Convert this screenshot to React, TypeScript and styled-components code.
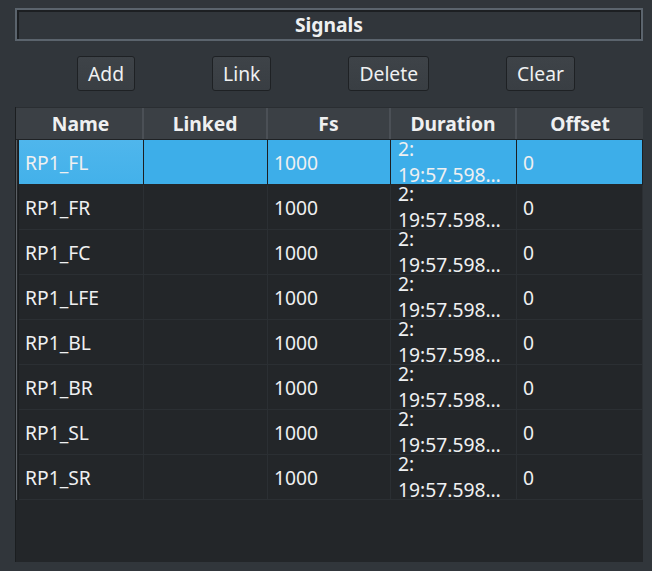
import React from "react";
import styled, { createGlobalStyle } from "styled-components";

const Global = createGlobalStyle`
  html, body { margin: 0; padding: 0; background: #31363b; }
  body { font-family: "Noto Sans", "Open Sans", sans-serif; }
  * { box-sizing: border-box; }
`;

const Window = styled.div`
  width: 652px;
  height: 571px;
  background: #31363b;
  padding: 8px 9px 9px 15px;
  display: flex;
  flex-direction: column;
  color: #eff0f1;
  font-size: 19.3px;
  overflow: hidden;
`;

const TitleFrame = styled.div`
  height: 33px;
  border: 2px solid #5b646d;
  box-shadow: inset 2px 2px 0 #1c1f22, inset -1px 0 0 #1c1f22;
  display: flex;
  align-items: center;
  justify-content: center;
  font-weight: 700;
  line-height: 1;
  padding-top: 1px;
`;

const ButtonRow = styled.div`
  margin: 15px -9px 0 -15px;
  height: 35px;
  display: flex;
  justify-content: space-evenly;
`;

const Button = styled.button`
  height: 35px;
  padding: 0 10px;
  background: linear-gradient(#3e4348, #393e43);
  border: 1px solid #1e2124;
  border-radius: 3px;
  color: #eff0f1;
  font-family: inherit;
  font-size: 19.3px;
  line-height: 1;
`;

const Table = styled.div`
  margin-top: 16px;
  height: 455px;
  background: #232629;
  border-left: 1px solid #1b1e20;
  display: flex;
  flex-direction: column;
`;

const cols = "3px 125px 124px 123px 126px 126px";

const HeaderRow = styled.div`
  display: grid;
  grid-template-columns: ${cols};
  height: 33px;
  background: #3b4045;
  border-top: 1px solid #2a2e32;
  border-bottom: 1px solid #1f2225;
`;

const HeaderCell = styled.div<{ $corner?: boolean }>`
  display: flex;
  align-items: center;
  justify-content: center;
  font-weight: 700;
  border-right: ${(p) => (p.$corner ? "none" : "2px solid #4b5056")};
  padding-bottom: 1px;
  white-space: nowrap;
  &:last-child { border-right: none; }
`;

const Row = styled.div<{ $selected?: boolean }>`
  display: grid;
  grid-template-columns: ${cols};
  height: 45px;
  background: ${(p) => (p.$selected ? "#3daee9" : "#232629")};
`;

const RowHeader = styled.div`
  background: #232629;
  border-left: 1px solid #5a5f64;
  border-right: 1px solid #1b1e20;
`;

const Cell = styled.div<{ $focus?: boolean }>`
  display: flex;
  align-items: center;
  padding-left: 6px;
  border-right: 1px solid #2b2f33;
  border-bottom: 1px solid #2b2f33;
  background: ${(p) => (p.$focus ? "linear-gradient(#4fb6ec, #43b1ea)" : "transparent")};
  white-space: nowrap;
  overflow: hidden;
`;

const SelCell = styled(Cell)`
  border-right-color: #1c1f22;
  border-bottom-color: #232629;
`;

const DurationText = styled.div`
  line-height: 26px;
  padding-left: 1px;
  white-space: pre;
`;

const names = ["RP1_FL", "RP1_FR", "RP1_FC", "RP1_LFE", "RP1_BL", "RP1_BR", "RP1_SL", "RP1_SR"];

export default function App() {
  return (
    <>
      <Global />
      <Window>
        <TitleFrame>Signals</TitleFrame>
        <ButtonRow>
          <Button>Add</Button>
          <Button>Link</Button>
          <Button>Delete</Button>
          <Button>Clear</Button>
        </ButtonRow>
        <Table>
          <HeaderRow>
            <HeaderCell $corner />
            <HeaderCell>Name</HeaderCell>
            <HeaderCell>Linked</HeaderCell>
            <HeaderCell>Fs</HeaderCell>
            <HeaderCell>Duration</HeaderCell>
            <HeaderCell>Offset</HeaderCell>
          </HeaderRow>
          {names.map((n, i) => {
            const C = i === 0 ? SelCell : Cell;
            return (
              <Row key={n} $selected={i === 0}>
                <RowHeader />
                <C $focus={i === 0}>{n}</C>
                <C />
                <C>1000</C>
                <C>
                  <DurationText>{"2:\n19:57.598…"}</DurationText>
                </C>
                <C>0</C>
              </Row>
            );
          })}
        </Table>
      </Window>
    </>
  );
}
